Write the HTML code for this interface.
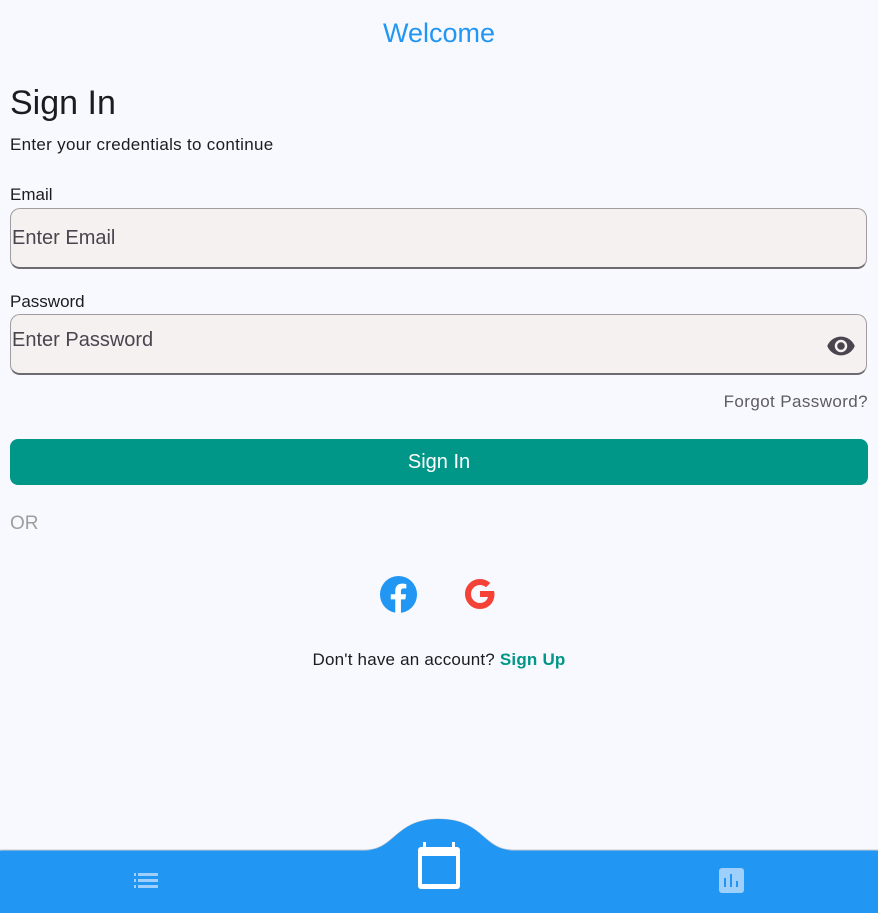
<!DOCTYPE html>
<html><head><style>
body{margin:0;width:878px;height:913px;background:#f8f9ff;font-family:"Liberation Sans",sans-serif;position:relative;overflow:hidden;color:#1c1b1f}
.a{position:absolute;white-space:nowrap}
.f{position:absolute;left:10px;width:855px;height:58px;background:#f5f1f0;border:1px solid #a09ca0;border-bottom:2px solid #6f6a6f;border-radius:10px;box-sizing:content-box}
.f span{position:absolute;left:1px;font-size:20px;color:#49454f}
</style></head><body>
<div class="a" style="left:0;width:878px;text-align:center;top:18px;font-size:27px;color:#2196f3">Welcome</div>
<div class="a" style="left:10px;top:84px;font-size:34px">Sign In</div>
<div class="a" style="left:10px;top:135px;font-size:17px;letter-spacing:0.3px">Enter your credentials to continue</div>
<div class="a" style="left:10px;top:185px;font-size:17px">Email</div>
<div class="f" style="top:208px"><span style="top:18px">Enter Email</span></div>
<div class="a" style="left:10px;top:292px;font-size:17px">Password</div>
<div class="f" style="top:314px"><span style="top:14px">Enter Password</span>
<svg style="position:absolute;right:10px;top:16px" width="30" height="30" viewBox="0 0 24 24"><path fill="#49454f" d="M12 4.5C7 4.5 2.73 7.61 1 12c1.730 4.39 6 7.5 11 7.5s9.27-3.11 11-7.5c-1.73-4.390-6-7.5-11-7.5zM12 17c-2.76 0-5-2.24-5-5s2.24-5 5-5 5 2.24 5 5-2.24 5-5 5zm0-8c-1.66 0-3 1.34-3 3s1.34 3 3 3 3-1.34 3-3-1.34-3-3-3z"/></svg></div>
<div class="a" style="right:10px;top:392px;font-size:17px;color:#5f5b62;letter-spacing:0.4px">Forgot Password?</div>
<div class="a" style="left:10px;top:439px;width:858px;height:46px;background:#009688;border-radius:8px;color:#fff;font-size:20px;text-align:center;line-height:46px">Sign In</div>
<div class="a" style="left:10px;top:513px;font-size:19px;color:#9e9e9e">OR</div>
<svg class="a" style="left:379px;top:575px" width="39" height="39" viewBox="0 0 40 40"><circle cx="20" cy="20" r="19" fill="#2196f3"/><path fill="#fff" d="M22.5 40V25h4.5l.8-5.3h-5.3v-3.2c0-1.5.7-2.8 3-2.8h2.5V9.2S25.8 8.8 23.7 8.8c-4.4 0-7 2.6-7 7.3v3.6h-4.6V25h4.6v15z"/></svg>
<svg class="a" style="left:461px;top:575px" width="38" height="38" viewBox="0 0 38 38"><path d="M33 16H19v6h8c-1.2 4-4.2 6-8 6-5 0-9-4-9-9s4-9 9-9c2.3 0 4.4.8 6 2.3l4.3-4.3C26.6 5.6 23 4 19 4 10.7 4 4 10.7 4 19s6.7 15 15 15c8 0 14.5-6 14.5-15 0-1-.2-2-.5-3z" fill="#f44336"/></svg>
<div class="a" style="left:0;width:878px;text-align:center;top:650px;font-size:17px;letter-spacing:0.2px">Don't have an account? <b style="color:#009688">Sign Up</b></div>
<svg class="a" style="left:0;top:815px" width="878" height="98"><path d="M0 35H365C395 35 395 4 439 4S483 35 513 35H878V98H0Z" fill="#2196f3" stroke="#ccc" stroke-width="1"/><path d="M0 36H878V98H0Z" fill="#2196f3"/><path d="M366 35C395 35 395 4 439 4S483 35 512 35" fill="#2196f3"/></svg>
<svg class="a" style="left:416px;top:841px" width="46" height="48" viewBox="0 0 46 48"><rect x="2" y="6" width="42" height="42" rx="3" fill="#fff"/><rect x="6" y="15" width="34" height="28" fill="#2196f3"/><rect x="7" y="1" width="3" height="7" fill="#fff"/><rect x="36" y="1" width="3" height="7" fill="#fff"/></svg>
<svg class="a" style="left:134px;top:873px" width="25" height="16"><g fill="#9fd0fb"><rect x="0" y="0" width="2" height="3"/><rect x="0" y="6" width="2" height="3"/><rect x="0" y="12" width="2" height="3"/><rect x="4" y="0" width="20" height="3"/><rect x="4" y="6" width="20" height="3"/><rect x="4" y="12" width="20" height="3"/></g></svg>
<svg class="a" style="left:719px;top:868px" width="25" height="25"><rect width="25" height="25" rx="3" fill="#9fd0fb"/><rect x="5" y="10" width="2" height="9" fill="#2196f3"/><rect x="11" y="6" width="2" height="13" fill="#2196f3"/><rect x="17" y="13" width="2" height="6" fill="#2196f3"/></svg>
</body></html>
